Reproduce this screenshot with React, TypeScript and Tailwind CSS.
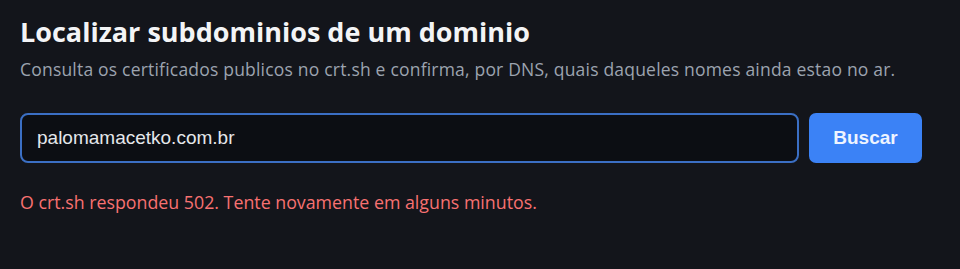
import { useState } from "react";

export default function App() {
  const [domain, setDomain] = useState("palomamacetko.com.br");

  return (
    <div className="min-h-[269px] w-full bg-[#13151b] px-5 pt-[14px]" style={{ fontFamily: "'Open Sans', 'Noto Sans', sans-serif" }}>
      <div className="w-[902px]">
        <h1 className="text-[27px] font-bold leading-[36px] text-[#f3f4f6]">Localizar subdominios de um dominio</h1>
        <p className="mt-[7px] text-[17.5px] leading-[24px] tracking-[0.2px] text-[#9ca3af]">
          Consulta os certificados publicos no crt.sh e confirma, por DNS, quais daqueles nomes ainda estao no ar.
        </p>

        <form className="mt-[32px] flex gap-[10px]" onSubmit={(e) => e.preventDefault()}>
          <input
            value={domain}
            onChange={(e) => setDomain(e.target.value)}
            className="h-[50px] flex-1 rounded-[8px] border-2 border-[#3b6fc4] bg-[#0c0e13] px-[15px] text-[19px] text-[#e5e7eb] outline-none"
            style={{ fontFamily: "'Liberation Sans', Arial, sans-serif" }}
          />
          <button
            type="submit"
            className="h-[50px] w-[113px] rounded-[7px] bg-[#3b82f6] text-[19px] font-bold text-[#eef4ff]"
            style={{ fontFamily: "'Liberation Sans', Arial, sans-serif" }}
          >
            Buscar
          </button>
        </form>

        <p className="mt-[27px] text-[17.8px] leading-[24px] text-[#f87171]">
          O crt.sh respondeu 502. Tente novamente em alguns minutos.
        </p>
      </div>
    </div>
  );
}
